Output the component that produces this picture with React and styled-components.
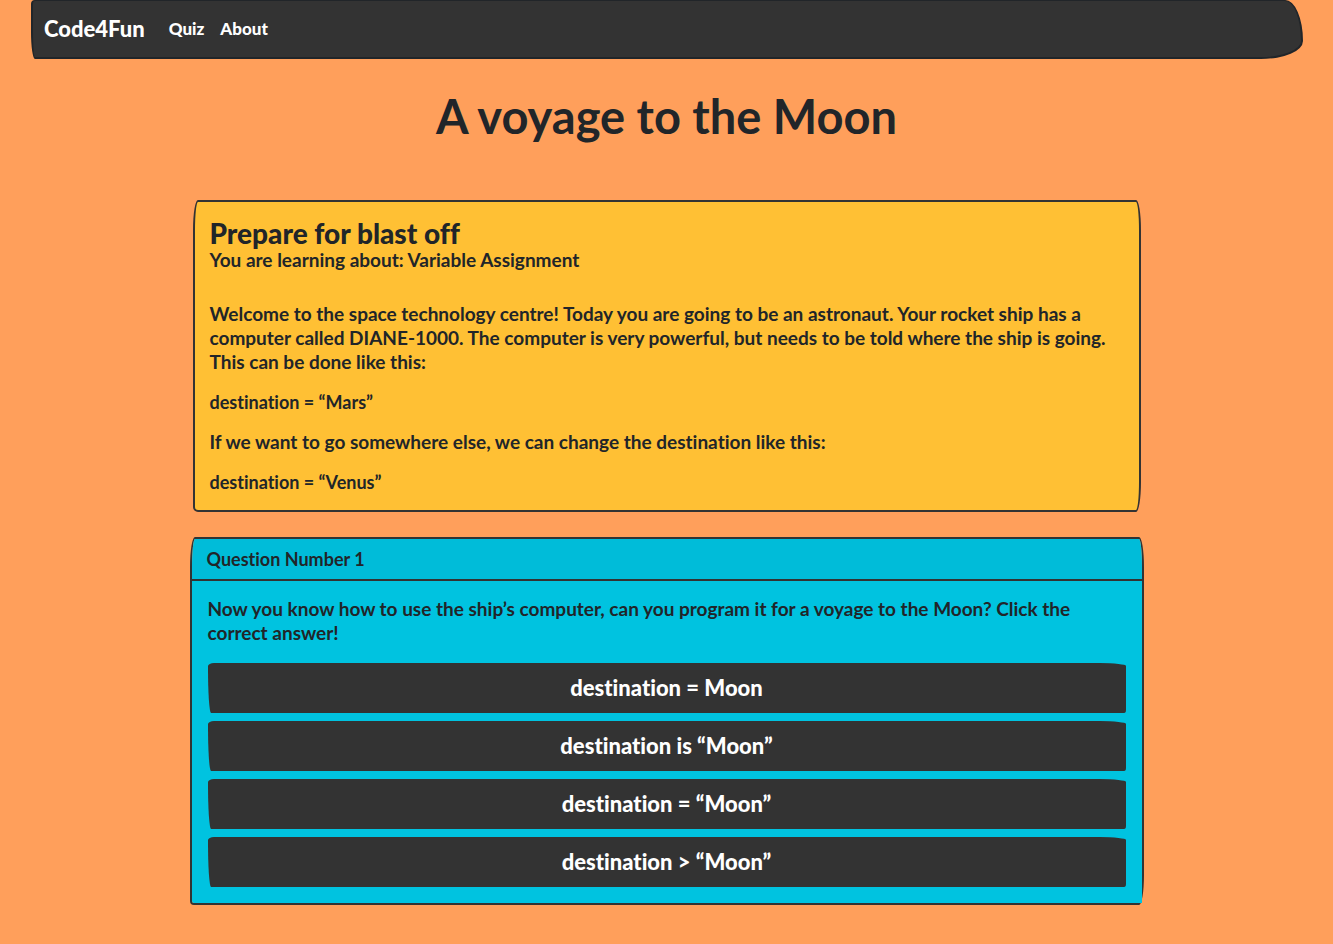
import React from "react";
import styled, { createGlobalStyle } from "styled-components";

const GlobalStyle = createGlobalStyle`
  *, *::before, *::after { box-sizing: border-box; }
  body {
    margin: 0;
    background: #ff9f5b;
    color: #212529;
    font-family: Lato, "Liberation Sans", sans-serif;
    font-size: 19px;
    font-weight: 700;
    font-variant-ligatures: none;
    line-height: 24px;
  }
`;

const Page = styled.div`
  min-height: 100vh;
  padding-bottom: 39px;
`;

const Navbar = styled.nav`
  display: flex;
  align-items: center;
  gap: 24px;
  height: 59px;
  margin: 0 30px 0 31px;
  padding: 0 11px;
  background: #333;
  border: 2px solid #212529;
  border-top-width: 1px;
  border-radius: 4px 18px 42px 4px / 4px 41px 18px 27px;
`;

const Brand = styled.a`
  color: #fff;
  font-size: 22px;
  font-weight: 900;
  text-decoration: none;
`;

const NavLinks = styled.div`
  display: flex;
  gap: 16px;
`;

const NavLink = styled.a`
  color: #fff;
  font-size: 17px;
  font-weight: 900;
  text-decoration: none;
`;

const Main = styled.main`
  display: flex;
  flex-direction: column;
  align-items: center;
  padding: 0 16px;
`;

const Title = styled.h1`
  margin: 28px 0 54px;
  font-size: 47px;
  font-weight: 700;
  line-height: 59px;
  text-align: center;
`;

const LessonCard = styled.section`
  width: 100%;
  max-width: 948px;
  padding: 16px 15px;
  background: #ffc034;
  border: 2px solid #333;
  border-radius: 5px 5px 5px 5px / 30px 30px 30px 5px;
`;

const LessonTitle = styled.h2`
  margin: 0;
  font-size: 28px;
  font-weight: 900;
  line-height: 30px;
`;

const LessonTopic = styled.p`
  margin: 0 0 30px;
`;

const Paragraph = styled.p`
  margin: 0 0 16px;
  &:last-child { margin-bottom: 0; }
`;

const CodeLine = styled(Paragraph)`
  font-size: 18px;
`;

const QuestionCard = styled.section`
  width: 100%;
  max-width: 954px;
  margin-top: 25px;
  border: 2px solid #333;
  border-radius: 5px 5px 5px 4px / 30px 30px 30px 4px;
`;

const QuestionHeader = styled.h2`
  margin: 0;
  padding: 8px 15px;
  font-size: 18px;
  font-weight: 700;
  line-height: 24px;
  background: #00bcd9;
  border-bottom: 2px solid #333;
  border-radius: 3px 3px 0 0 / 28px 28px 0 0;
`;

const QuestionBody = styled.div`
  padding: 16px;
  background: #00c3e0;
  border-radius: 0 0 0 2px;
`;

const Prompt = styled.p`
  margin: 0 0 18px;
  padding-right: 32px;
`;

const Answers = styled.div`
  display: grid;
  gap: 8px;
`;

const AnswerButton = styled.button`
  width: 100%;
  height: 50px;
  padding: 0 16px;
  color: #fff;
  background: #333;
  border: 0;
  border-radius: 6px 26px 2px 3px / 3px 3px 3px 45px;
  font: 900 22px/30px Lato, "Liberation Sans", sans-serif;
  font-variant-ligatures: none;
  cursor: pointer;
`;

const answers = [
  "destination = Moon",
  "destination is “Moon”",
  "destination = “Moon”",
  "destination > “Moon”",
];

export default function App() {
  return (
    <Page>
      <GlobalStyle />
      <Navbar>
        <Brand href="#">Code4Fun</Brand>
        <NavLinks>
          <NavLink href="#quiz">Quiz</NavLink>
          <NavLink href="#about">About</NavLink>
        </NavLinks>
      </Navbar>
      <Main>
        <Title>A voyage to the Moon</Title>
        <LessonCard>
          <LessonTitle>Prepare for blast off</LessonTitle>
          <LessonTopic>You are learning about: Variable Assignment</LessonTopic>
          <Paragraph>
            Welcome to the space technology centre! Today you are going to be an
            astronaut. Your rocket ship has a computer called DIANE-1000. The
            computer is very powerful, but needs to be told where the ship is
            going. This can be done like this:
          </Paragraph>
          <CodeLine>destination = “Mars”</CodeLine>
          <Paragraph>
            If we want to go somewhere else, we can change the destination like
            this:
          </Paragraph>
          <CodeLine>destination = “Venus”</CodeLine>
        </LessonCard>
        <QuestionCard id="quiz">
          <QuestionHeader>Question Number 1</QuestionHeader>
          <QuestionBody>
            <Prompt>
              Now you know how to use the ship’s computer, can you program it
              for a voyage to the Moon? Click the correct answer!
            </Prompt>
            <Answers>
              {answers.map((answer) => (
                <AnswerButton type="button" key={answer}>{answer}</AnswerButton>
              ))}
            </Answers>
          </QuestionBody>
        </QuestionCard>
      </Main>
    </Page>
  );
}
